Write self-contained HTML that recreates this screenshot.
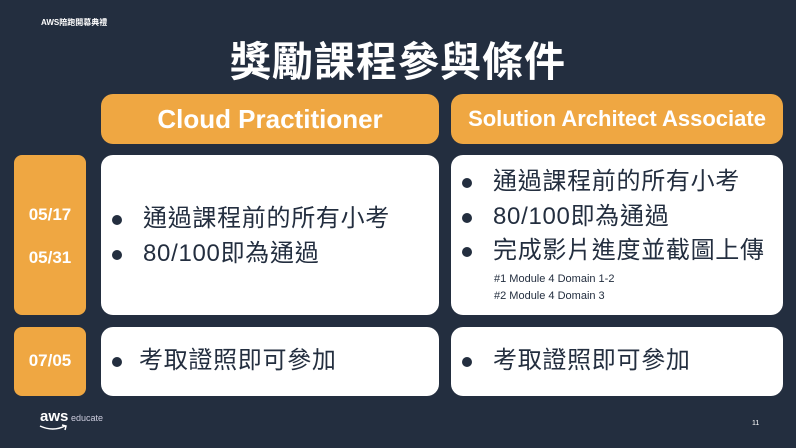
<!DOCTYPE html>
<html><head><meta charset="utf-8"><style>
*{margin:0;padding:0;box-sizing:border-box}
body{width:796px;height:448px;background:#232e3f;position:relative;overflow:hidden;font-family:"Liberation Sans","Noto Sans CJK TC",sans-serif;color:#232e3f}
.a{position:absolute}
.or{background:#efa742;border-radius:12px}
.wh{background:#fff;border-radius:12px}
.hd{color:#fff;font-weight:bold;font-size:26px;display:flex;align-items:center;justify-content:center}
.dt{color:#fff;font-weight:bold;font-size:17px;position:absolute;left:0;width:72px;text-align:center}
ul{list-style:none}
li{position:relative;padding-left:42px;font-size:24px;line-height:34.5px;letter-spacing:0.7px;white-space:nowrap}
li:before{content:"";position:absolute;left:11px;top:13px;width:10px;height:10px;border-radius:50%;background:#232e3f}
</style></head><body>
<div class="a" style="left:41px;top:17px;font-size:8px;color:#fff;font-weight:bold">AWS陪跑開幕典禮</div>
<div class="a" style="left:0;width:796px;top:28px;text-align:center;color:#fff;font-size:41px;font-weight:bold;letter-spacing:1px">獎勵課程參與條件</div>
<div class="a or hd" style="left:101px;top:94px;width:338px;height:50px">Cloud Practitioner</div>
<div class="a or hd" style="left:451px;top:94px;width:332px;height:50px;font-size:22px">Solution Architect Associate</div>
<div class="a or" style="left:14px;top:155px;width:72px;height:160px;border-radius:8px">
<div class="dt" style="top:50px">05/17</div><div class="dt" style="top:93px">05/31</div></div>
<div class="a or" style="left:14px;top:327px;width:72px;height:69px;border-radius:8px"><div class="dt" style="top:24px">07/05</div></div>
<div class="a wh" style="left:101px;top:155px;width:338px;height:160px">
<ul style="margin-top:47px"><li>通過課程前的所有小考</li><li>80/100即為通過</li></ul></div>
<div class="a wh" style="left:451px;top:155px;width:332px;height:160px">
<ul style="margin-top:10px"><li>通過課程前的所有小考</li><li>80/100即為通過</li><li>完成影片進度並截圖上傳</li></ul>
<div style="font-size:11px;line-height:17px;margin-left:43px;margin-top:2px">#1 Module 4 Domain 1-2<br>#2 Module 4 Domain 3</div></div>
<div class="a wh" style="left:101px;top:327px;width:338px;height:69px"><ul style="margin-top:17px"><li style="padding-left:38px">考取證照即可參加</li></ul></div>
<div class="a wh" style="left:451px;top:327px;width:332px;height:69px"><ul style="margin-top:17px"><li>考取證照即可參加</li></ul></div>
<div class="a" style="left:40px;top:410px;color:#fff;font-size:15px;font-weight:bold;line-height:14px">aws</div>
<div class="a" style="left:71px;top:413px;color:#ccd;font-size:9px">educate</div>
<svg class="a" style="left:39px;top:424px" width="30" height="8"><path d="M1 2 Q14 8 26 2 M23 1 L27 2 L26 6" stroke="#fff" stroke-width="1.5" fill="none"/></svg>
<div class="a" style="left:752px;top:420px;color:#fff;font-size:7px">11</div>
</body></html>
